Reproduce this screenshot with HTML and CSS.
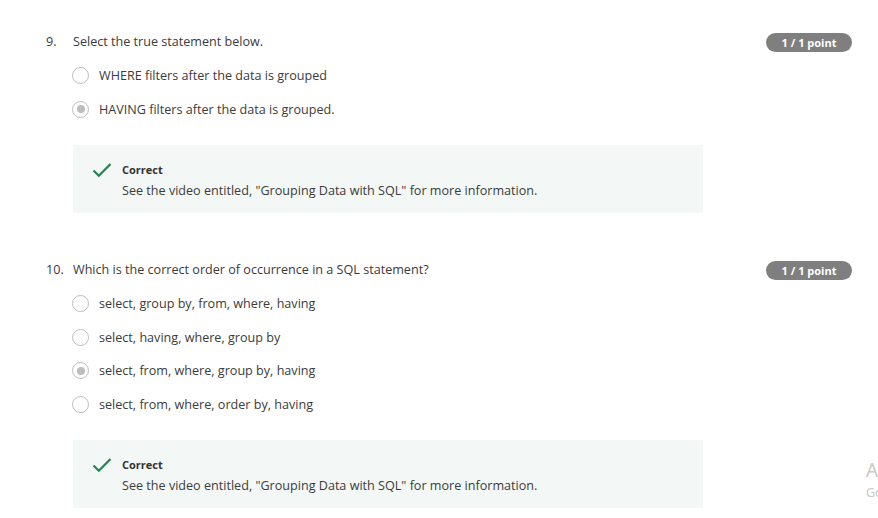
FILE: index.html
```html
<!DOCTYPE html>
<html>
<head>
<meta charset="utf-8">
<link rel="stylesheet" href="styles.css">
</head>
<body>
<div class="page">
  <section class="question">
    <div class="q-head">
      <span class="q-num">9.</span>
      <span class="q-text">Select the true statement below.</span>
      <span class="badge">1 / 1 point</span>
    </div>
    <div class="options">
      <div class="option"><span class="radio"></span><span>WHERE filters after the data is grouped</span></div>
      <div class="option"><span class="radio checked"></span><span>HAVING filters after the data is grouped.</span></div>
    </div>
    <div class="feedback">
      <svg class="check" width="20" height="16" viewBox="0 0 20 16"><path d="M1.5 8.5 L6.8 13.8 L18.5 2" fill="none" stroke="#1f8354" stroke-width="2.2"/></svg>
      <div class="fb-body">
        <div class="fb-title">Correct</div>
        <div class="fb-text">See the video entitled, "Grouping Data with SQL" for more information.</div>
      </div>
    </div>
  </section>

  <section class="question q2">
    <div class="q-head">
      <span class="q-num">10.</span>
      <span class="q-text">Which is the correct order of occurrence in a SQL statement?</span>
      <span class="badge">1 / 1 point</span>
    </div>
    <div class="options">
      <div class="option"><span class="radio"></span><span>select, group by, from, where, having</span></div>
      <div class="option"><span class="radio"></span><span>select, having, where, group by</span></div>
      <div class="option"><span class="radio checked"></span><span>select, from, where, group by, having</span></div>
      <div class="option"><span class="radio"></span><span>select, from, where, order by, having</span></div>
    </div>
    <div class="feedback">
      <svg class="check" width="20" height="16" viewBox="0 0 20 16"><path d="M1.5 8.5 L6.8 13.8 L18.5 2" fill="none" stroke="#1f8354" stroke-width="2.2"/></svg>
      <div class="fb-body">
        <div class="fb-title">Correct</div>
        <div class="fb-text">See the video entitled, "Grouping Data with SQL" for more information.</div>
      </div>
    </div>
  </section>
</div>
<div class="watermark">
  <div class="wm-title">Activate Windows</div>
  <div class="wm-sub">Go to Settings to activate Windows.</div>
</div>
</body>
</html>
```

FILE: styles.css
```css
html, body {
  margin: 0;
  padding: 0;
  background: #fff;
  overflow: hidden;
}
body {
  width: 878px;
  height: 518px;
  position: relative;
  font-family: "Open Sans", "Noto Sans", sans-serif;
  font-size: 12.6px;
  color: #3b3b3b;
}
.page {
  padding: 32px 26px 0 46px;
}
.question.q2 {
  margin-top: 47px;
}
.q-head {
  display: flex;
  align-items: center;
  height: 20px;
  line-height: 20px;
}
.q-num {
  width: 27px;
  flex: none;
}
.q-text {
  flex: 1;
}
.badge {
  flex: none;
  width: 86px;
  height: 19px;
  line-height: 19px;
  border-radius: 10px;
  background: #7f7f7f;
  color: #fff;
  font-weight: 700;
  font-size: 11px;
  text-align: center;
}
.options {
  margin-top: 7px;
  padding-left: 26px;
}
.option {
  display: flex;
  align-items: center;
  height: 33.5px;
}
.radio {
  flex: none;
  width: 15px;
  height: 15px;
  border: 1.5px solid #bdbdbd;
  border-radius: 50%;
  margin-right: 10px;
  position: relative;
}
.radio.checked::after {
  content: "";
  position: absolute;
  left: 3.5px;
  top: 3.5px;
  width: 8px;
  height: 8px;
  border-radius: 50%;
  background: #bdbdbd;
}
.feedback {
  margin: 19px 0 0 27px;
  width: 630px;
  height: 68px;
  box-sizing: border-box;
  background: #f3f8f6;
  display: flex;
  align-items: flex-start;
  padding: 15px 0 0 19px;
}
.check {
  flex: none;
  margin-top: 2px;
  margin-right: 10px;
}
.fb-title {
  font-weight: 700;
  font-size: 11px;
  line-height: 20px;
  color: #333;
}
.fb-text {
  line-height: 22px;
}
.watermark {
  position: absolute;
  left: 866px;
  top: 457px;
  color: #c9c9c9;
  white-space: nowrap;
  font-family: "Noto Sans", "Open Sans", sans-serif;
}
.wm-title {
  font-size: 19px;
  line-height: 26px;
}
.wm-sub {
  font-size: 12.5px;
  line-height: 20px;
}
```
